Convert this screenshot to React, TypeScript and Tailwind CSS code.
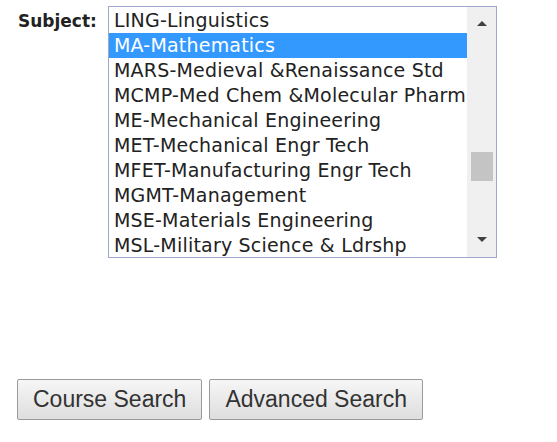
import React from "react";

const subjects = [
  "LING-Linguistics",
  "MA-Mathematics",
  "MARS-Medieval &Renaissance Std",
  "MCMP-Med Chem &Molecular Pharm",
  "ME-Mechanical Engineering",
  "MET-Mechanical Engr Tech",
  "MFET-Manufacturing Engr Tech",
  "MGMT-Management",
  "MSE-Materials Engineering",
  "MSL-Military Science & Ldrshp",
];

function Scrollbar() {
  return (
    <div className="w-[29px] h-full bg-[#f0f0f0] flex flex-col items-center">
      {/* up arrow */}
      <div className="h-[28px] w-full flex items-center justify-center pt-[4px]">
        <div className="w-0 h-0 border-l-[5px] border-r-[5px] border-b-[5px] border-l-transparent border-r-transparent border-b-[#404040]" />
      </div>
      {/* thumb */}
      <div className="mt-[117px] w-[22px] h-[29px] bg-[#c4c4c4]" />
      <div className="flex-1" />
      {/* down arrow */}
      <div className="h-[22px] w-full flex items-start justify-center pt-[2px]">
        <div className="w-0 h-0 border-l-[5px] border-r-[5px] border-t-[5px] border-l-transparent border-r-transparent border-t-[#404040]" />
      </div>
    </div>
  );
}

export default function App() {
  return (
    <div className="w-[557px] h-[442px] bg-white flex flex-col">
      {/* Subject row */}
      <div className="flex flex-row pt-[6px] pl-[18px]">
        <div
          className="w-[90px] pt-[4px] text-[17px] leading-[22px] font-bold text-[#222]"
          style={{ fontFamily: '"DejaVu Sans", Verdana, sans-serif' }}
        >
          Subject:
        </div>
        <div className="w-[389px] h-[252px] border border-[#9ea8cc] flex flex-row bg-white">
          <div
            className="flex-1 flex flex-col pt-[1px] overflow-hidden"
            style={{ fontFamily: '"DejaVu Sans", Verdana, sans-serif' }}
          >
            {subjects.map((s, i) => (
              <div
                key={s}
                className={
                  "h-[25px] leading-[25px] pl-[5px] text-[19px] tracking-[0.2px] whitespace-nowrap " +
                  (i === 1 ? "bg-[#3399ff] text-white" : "text-[#222]")
                }
              >
                {s}
              </div>
            ))}
          </div>
          <Scrollbar />
        </div>
      </div>

      {/* Buttons */}
      <div
        className="flex flex-row gap-[7px] pl-[17px] mt-[121px]"
        style={{ fontFamily: '"Liberation Sans", Arial, sans-serif' }}
      >
        <button className="h-[41px] px-[15px] text-[23px] text-[#333] border border-[#9a9a9a] rounded-[2px] bg-gradient-to-b from-[#f6f6f6] to-[#dedede]">
          Course Search
        </button>
        <button className="h-[41px] px-[15px] text-[23px] text-[#333] border border-[#9a9a9a] rounded-[2px] bg-gradient-to-b from-[#f6f6f6] to-[#dedede]">
          Advanced Search
        </button>
      </div>
    </div>
  );
}
